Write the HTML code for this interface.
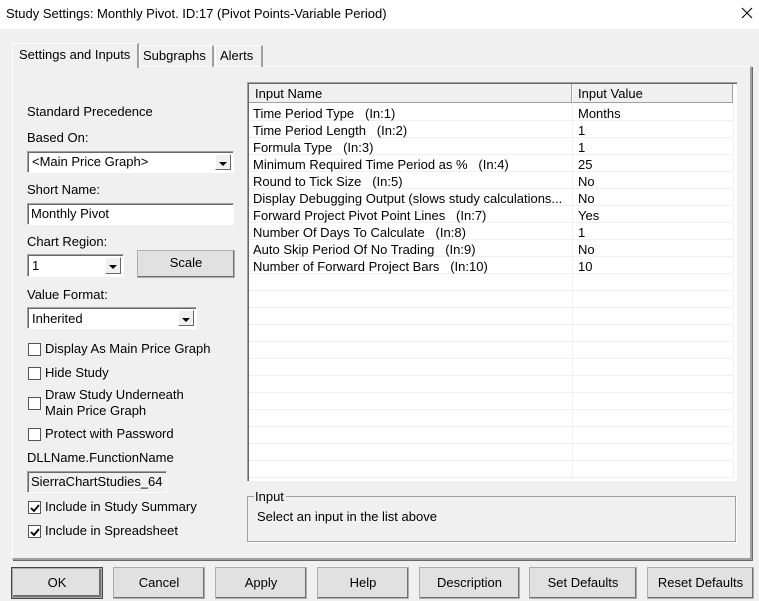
<!DOCTYPE html>
<html><head><meta charset="utf-8"><style>
*{box-sizing:border-box;margin:0;padding:0}
body{width:759px;height:601px;background:#f0f0f0;font-family:"Liberation Sans",sans-serif;font-size:13px;color:#000;position:relative;overflow:hidden}
.a{position:absolute;white-space:nowrap}
.title{left:0;top:0;width:759px;height:29px;background:#fff}
.btn{position:absolute;background:#e1e1e1;border:1px solid #adadad;box-shadow:inset -1px -1px 0 #707070;text-align:center;line-height:29px;height:32px;top:567px}
.sunk{position:absolute;background:#fff;border-top:1px solid #a0a0a0;border-left:1px solid #a0a0a0;border-right:1px solid #fff;border-bottom:1px solid #fff;box-shadow:inset 1px 1px 0 #696969}
.dd{position:absolute;right:2px;top:2px;bottom:2px;width:16px;background:#f0f0f0;border-top:1px solid #fff;border-left:1px solid #fff;border-right:1px solid #696969;border-bottom:1px solid #696969}
.dd:after{content:"";position:absolute;left:3px;top:7px;border-left:4px solid transparent;border-right:4px solid transparent;border-top:4px solid #000}
.cb{position:absolute;width:13px;height:13px;background:#fff;border:1px solid #555;left:28px}
.row{position:absolute;left:249px;width:485px;height:17px;border-bottom:1px solid #f0f0f0}
.row span{position:absolute;top:2px}
</style></head><body>
<div class="a title"></div>
<div class="a" style="left:6px;top:6px">Study Settings: Monthly Pivot. ID:17 (Pivot Points-Variable Period)</div>
<svg class="a" style="left:741px;top:7px" width="12" height="12"><path d="M1 1L11 11M11 1L1 11" stroke="#000" stroke-width="1.1"/></svg>

<div class="a" style="left:12px;top:66px;width:740px;height:494px;border-top:1px solid #fff;border-left:1px solid #fff;border-right:2px solid #a0a0a0;border-bottom:2px solid #a0a0a0;box-shadow:1px 1px 0 #696969"></div>
<div class="a" style="left:139px;top:45px;width:75px;height:22px;border:1px solid #fff;border-right:2px solid #a0a0a0;border-bottom:none"></div>
<div class="a" style="left:143px;top:48px">Subgraphs</div>
<div class="a" style="left:215px;top:45px;width:48px;height:22px;border:1px solid #fff;border-right:2px solid #a0a0a0;border-bottom:none"></div>
<div class="a" style="left:220px;top:48px">Alerts</div>
<div class="a" style="left:12px;top:43px;width:127px;height:25px;background:#f0f0f0;border:1px solid #fff;border-right:2px solid #a0a0a0;border-bottom:none"></div>
<div class="a" style="left:19px;top:47px">Settings and Inputs</div>

<div class="a" style="left:27px;top:104px">Standard Precedence</div>
<div class="a" style="left:27px;top:130px">Based On:</div>
<div class="sunk" style="left:27px;top:151px;width:207px;height:22px"><span class="a" style="left:4px;top:2px">&lt;Main Price Graph&gt;</span><div class="dd"></div></div>
<div class="a" style="left:27px;top:182px">Short Name:</div>
<div class="sunk" style="left:27px;top:203px;width:207px;height:22px"><span class="a" style="left:3px;top:2px">Monthly Pivot</span></div>
<div class="a" style="left:27px;top:234px">Chart Region:</div>
<div class="sunk" style="left:27px;top:254px;width:97px;height:23px"><span class="a" style="left:4px;top:3px">1</span><div class="dd"></div></div>
<div class="btn" style="left:137px;top:250px;width:98px;height:28px;line-height:24px">Scale</div>
<div class="a" style="left:27px;top:287px">Value Format:</div>
<div class="sunk" style="left:27px;top:307px;width:170px;height:22px"><span class="a" style="left:4px;top:3px">Inherited</span><div class="dd"></div></div>

<div class="cb" style="top:343px"></div><div class="a" style="left:45px;top:341px">Display As Main Price Graph</div>
<div class="cb" style="top:367px"></div><div class="a" style="left:45px;top:365px">Hide Study</div>
<div class="cb" style="top:397px"></div><div class="a" style="left:45px;top:387px;line-height:16px">Draw Study Underneath<br>Main Price Graph</div>
<div class="cb" style="top:428px"></div><div class="a" style="left:45px;top:426px">Protect with Password</div>
<div class="a" style="left:27px;top:450px">DLLName.FunctionName</div>
<div class="sunk" style="left:27px;top:471px;width:140px;height:22px;background:#f0f0f0"><span class="a" style="left:3px;top:2px">SierraChartStudies_64</span></div>
<div class="cb" style="top:501px"><svg class="a" style="left:1px;top:1px" width="10" height="10"><path d="M1 5L4 8L9 2" stroke="#000" stroke-width="1.8" fill="none"/></svg></div><div class="a" style="left:45px;top:499px">Include in Study Summary</div>
<div class="cb" style="top:525px"><svg class="a" style="left:1px;top:1px" width="10" height="10"><path d="M1 5L4 8L9 2" stroke="#000" stroke-width="1.8" fill="none"/></svg></div><div class="a" style="left:45px;top:523px">Include in Spreadsheet</div>

<div class="a" style="left:247px;top:82px;width:490px;height:399px;background:#fff;border-top:1px solid #a0a0a0;border-left:1px solid #a0a0a0;box-shadow:inset 1px 1px 0 #696969"></div>
<div class="a" style="left:249px;top:84px;width:323px;height:19px;background:#f0f0f0;border-right:1px solid #a0a0a0;border-bottom:1px solid #a0a0a0"></div>
<div class="a" style="left:572px;top:84px;width:161px;height:19px;background:#f0f0f0;border-right:1px solid #a0a0a0;border-bottom:1px solid #a0a0a0;border-left:1px solid #fff"></div>
<div class="a" style="left:255px;top:86px">Input Name</div>
<div class="a" style="left:578px;top:86px">Input Value</div>
<div class="a" style="left:572px;top:104px;width:1px;height:374px;background:#f0f0f0"></div>
<div class="a" style="left:733px;top:104px;width:1px;height:374px;background:#f0f0f0"></div>

<div class="row" style="top:104px"><span style="left:4px">Time Period Type &nbsp;&nbsp;(In:1)</span><span style="left:329px">Months</span></div>
<div class="row" style="top:121px"><span style="left:4px">Time Period Length &nbsp;&nbsp;(In:2)</span><span style="left:329px">1</span></div>
<div class="row" style="top:138px"><span style="left:4px">Formula Type &nbsp;&nbsp;(In:3)</span><span style="left:329px">1</span></div>
<div class="row" style="top:155px"><span style="left:4px">Minimum Required Time Period as % &nbsp;&nbsp;(In:4)</span><span style="left:329px">25</span></div>
<div class="row" style="top:172px"><span style="left:4px">Round to Tick Size &nbsp;&nbsp;(In:5)</span><span style="left:329px">No</span></div>
<div class="row" style="top:189px"><span style="left:4px">Display Debugging Output (slows study calculations...</span><span style="left:329px">No</span></div>
<div class="row" style="top:206px"><span style="left:4px">Forward Project Pivot Point Lines &nbsp;&nbsp;(In:7)</span><span style="left:329px">Yes</span></div>
<div class="row" style="top:223px"><span style="left:4px">Number Of Days To Calculate &nbsp;&nbsp;(In:8)</span><span style="left:329px">1</span></div>
<div class="row" style="top:240px"><span style="left:4px">Auto Skip Period Of No Trading &nbsp;&nbsp;(In:9)</span><span style="left:329px">No</span></div>
<div class="row" style="top:257px"><span style="left:4px">Number of Forward Project Bars &nbsp;&nbsp;(In:10)</span><span style="left:329px">10</span></div>
<div class="row" style="top:274px"></div><div class="row" style="top:291px"></div><div class="row" style="top:308px"></div><div class="row" style="top:325px"></div><div class="row" style="top:342px"></div><div class="row" style="top:359px"></div><div class="row" style="top:376px"></div><div class="row" style="top:393px"></div><div class="row" style="top:410px"></div><div class="row" style="top:427px"></div><div class="row" style="top:444px"></div><div class="row" style="top:461px"></div>

<div class="a" style="left:247px;top:496px;width:489px;height:46px;border:1px solid #a0a0a0;box-shadow:1px 1px 0 #fff"></div>
<div class="a" style="left:254px;top:489px;background:#f0f0f0;padding:0 2px 0 1px">Input</div>
<div class="a" style="left:257px;top:509px">Select an input in the list above</div>

<div class="btn" style="left:11px;width:92px;border:1px solid #444;box-shadow:inset 0 0 0 1px #adadad,inset -2px -2px 0 1px #707070">OK</div>
<div class="btn" style="left:113px;width:92px">Cancel</div>
<div class="btn" style="left:215px;width:92px">Apply</div>
<div class="btn" style="left:317px;width:92px">Help</div>
<div class="btn" style="left:419px;width:101px">Description</div>
<div class="btn" style="left:529px;width:108px">Set Defaults</div>
<div class="btn" style="left:647px;width:107px">Reset Defaults</div>
</body></html>
